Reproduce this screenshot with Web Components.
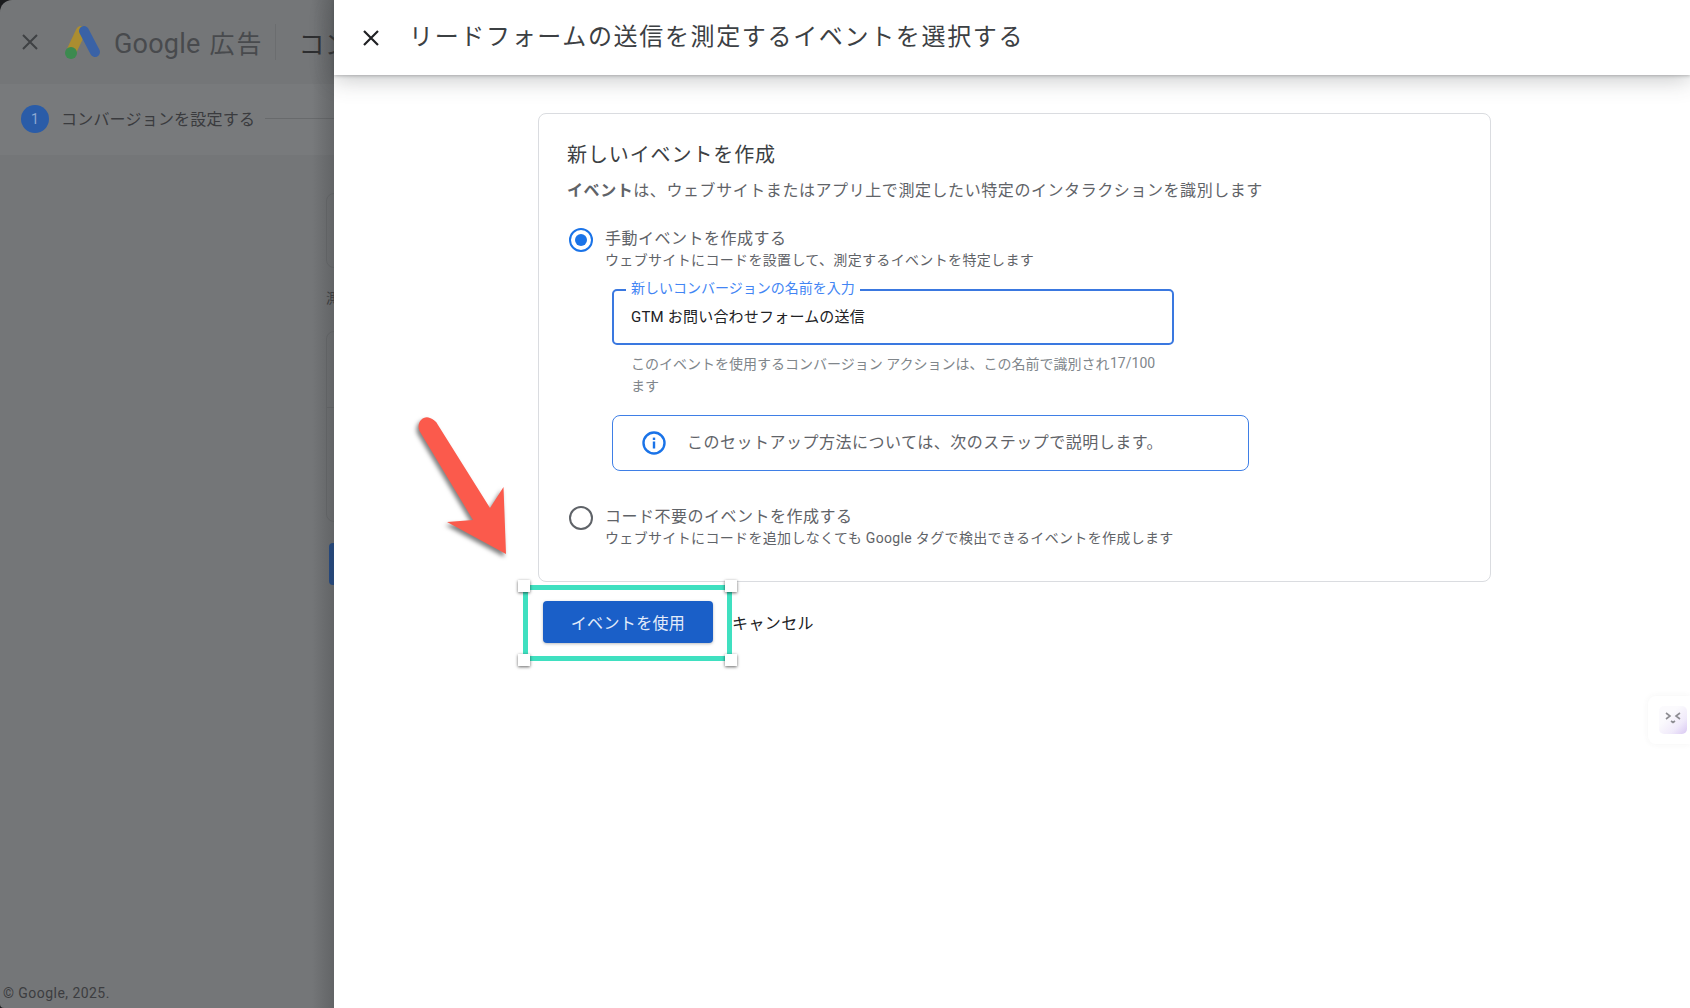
<!DOCTYPE html>
<html lang="ja">
<head>
<meta charset="utf-8">
<title>イベントを選択</title>
<style>
    html, body {
        margin: 0;
        height: 100%;
        overflow: hidden;
        background: #fff;
        font-family: Roboto, "Noto Sans CJK JP", sans-serif;
    }
</style>
</head>
<body>
<app-shell>
    <ads-backdrop slot="backdrop"></ads-backdrop>
    <side-panel slot="panel" heading="リードフォームの送信を測定するイベントを選択する">
        <event-card heading="新しいイベントを作成">
            <span slot="lead"><b>イベント</b>は、ウェブサイトまたはアプリ上で測定したい特定のインタラクションを識別します</span>
            <radio-option checked label="手動イベントを作成する" hint="ウェブサイトにコードを設置して、測定するイベントを特定します">
                <outlined-field label="新しいコンバージョンの名前を入力" value="GTM お問い合わせフォームの送信"
                    help="このイベントを使用するコンバージョン アクションは、この名前で識別されます" count="17/100"></outlined-field>
                <info-note>このセットアップ方法については、次のステップで説明します。</info-note>
            </radio-option>
            <radio-option class="second" label="コード不要のイベントを作成する" hint="ウェブサイトにコードを追加しなくても Google タグで検出できるイベントを作成します"></radio-option>
        </event-card>
        <action-bar primary="イベントを使用" secondary="キャンセル"></action-bar>
    </side-panel>
    <capture-annotation slot="overlay"></capture-annotation>
    <assistant-tab slot="overlay"></assistant-tab>
</app-shell>

<script>
class AppShell extends HTMLElement {
    constructor() {
        super()
        this.attachShadow({ mode: 'open' })
        this.shadowRoot.innerHTML = `
            <style>
                :host {
                    display: flex;
                    position: relative;
                    width: 100%;
                    height: 100vh;
                    overflow: hidden;
                }
                ::slotted([slot="backdrop"]) { flex: 0 0 334px; }
                ::slotted([slot="panel"]) { flex: 1 1 auto; }
            </style>
            <slot name="backdrop"></slot>
            <slot name="panel"></slot>
            <slot name="overlay"></slot>
        `
    }
}

class AdsBackdrop extends HTMLElement {
    constructor() {
        super()
        this.attachShadow({ mode: 'open' })
        this.shadowRoot.innerHTML = `
            <style>
                :host {
                    display: block;
                    background: #1b1c1e;
                    overflow: hidden;
                    min-width: 0;
                }
                .page {
                    position: relative;
                    height: 100%;
                    box-sizing: border-box;
                    display: flex;
                    flex-direction: column;
                    background: #747678;
                    border-radius: 12px 0 0 4px;
                    color: #303134;
                }
                .page::after {
                    content: '';
                    position: absolute;
                    top: 0;
                    bottom: 0;
                    right: 0;
                    width: 22px;
                    background: linear-gradient(90deg, rgba(60, 62, 64, 0), rgba(60, 62, 64, .32));
                }
                .top {
                    flex: none;
                    height: 84px;
                    display: flex;
                    align-items: center;
                    white-space: nowrap;
                }
                .close { flex: none; margin-left: 18px; width: 24px; height: 24px; }
                .logo { flex: none; margin-left: 22px; width: 38px; height: 38px; }
                .brand {
                    flex: none;
                    margin-left: 12px;
                    font-size: 27px;
                    letter-spacing: .2px;
                    color: #484a4d;
                }
                .brand span { margin-left: 9px; font-size: 25px; letter-spacing: 2px; }
                .rule { flex: none; width: 1px; height: 36px; margin-left: 12px; background: #6b6d6f; }
                .crumb { flex: none; margin-left: 22px; font-size: 26px; color: #2d2e30; }
                .steps {
                    flex: none;
                    height: 71px;
                    padding-bottom: 2px;
                    box-sizing: border-box;
                    display: flex;
                    align-items: center;
                    background: #787a7c;
                    white-space: nowrap;
                }
                .num {
                    margin-left: 21px;
                    flex: none;
                    width: 28px;
                    height: 28px;
                    border-radius: 50%;
                    background: #2a5ca8;
                    color: #8ea9d2;
                    font-size: 14px;
                    line-height: 28px;
                    text-align: center;
                }
                .label {
                    flex: none;
                    margin: 0 0 2px 12px;
                    font-size: 16px;
                    letter-spacing: .2px;
                    color: #3a3b3e;
                }
                .line { flex: 1; height: 1px; margin-left: 10px; background: #686a6c; }
                .content {
                    flex: 1;
                    padding: 38px 0 0 326px;
                    display: flex;
                    flex-direction: column;
                }
                .box { flex: none; border: 1px solid #6a6c6e; border-radius: 8px; width: 60px; box-sizing: border-box; }
                .box.a { height: 75px; }
                .measure { flex: none; margin-top: 20px; height: 20px; line-height: 20px; font-size: 14px; color: #3a3b3e; white-space: nowrap; }
                .box.b { margin-top: 23px; height: 191px; }
                .box.b i { display: block; margin-top: 75px; border-top: 1px solid #6a6c6e; }
                .btn { flex: none; margin: 21px 0 0 3px; height: 42px; width: 60px; border-radius: 4px; background: #1d4a8e; }
                .foot {
                    flex: none;
                    padding: 0 0 5px 3px;
                    font-size: 14px;
                    line-height: 20px;
                    letter-spacing: .45px;
                    color: #3c3d40;
                    white-space: nowrap;
                }
            </style>
            <div class="page">
                <div class="top">
                    <svg class="close" viewBox="0 0 24 24"><path d="M5 5 19 19M19 5 5 19" stroke="#3f4144" stroke-width="2" fill="none"/></svg>
                    <svg class="logo" viewBox="0 0 38 38">
                        <path d="M17 8 8 27" stroke="#ab8d30" stroke-width="10" stroke-linecap="round" fill="none"/>
                        <path d="M20 8 31 29" stroke="#3a62a6" stroke-width="10" stroke-linecap="round" fill="none"/>
                        <circle cx="7" cy="30" r="6" fill="#3c8a4f"/>
                    </svg>
                    <div class="brand">Google<span>広告</span></div>
                    <div class="rule"></div>
                    <div class="crumb">コンバ</div>
                </div>
                <div class="steps">
                    <div class="num">1</div>
                    <div class="label">コンバージョンを設定する</div>
                    <div class="line"></div>
                </div>
                <div class="content">
                    <div class="box a"></div>
                    <div class="measure">測</div>
                    <div class="box b"><i></i></div>
                    <div class="btn"></div>
                </div>
                <div class="foot">© Google, 2025.</div>
            </div>
        `
    }
}

class SidePanel extends HTMLElement {
    constructor() {
        super()
        this.attachShadow({ mode: 'open' })
    }

    connectedCallback() {
        this.shadowRoot.innerHTML = `
            <style>
                :host {
                    display: flex;
                    flex-direction: column;
                    min-width: 0;
                    background: #fff;
                    color: #3c4043;
                }
                header {
                    flex: none;
                    position: relative;
                    height: 75px;
                    display: flex;
                    align-items: center;
                    background: #fff;
                    box-shadow: 0 4px 22px rgba(60, 64, 67, .3), 0 1px 3px rgba(60, 64, 67, .3);
                }
                svg { margin-left: 25px; width: 24px; height: 24px; flex: none; }
                h1 {
                    margin: 0 0 2px 26px;
                    font-size: 24px;
                    font-weight: 400;
                    line-height: 36px;
                    letter-spacing: 1.66px;
                    color: #3c4043;
                    white-space: nowrap;
                }
                main {
                    flex: 1;
                    padding: 38px 0 0 204px;
                }
            </style>
            <header>
                <svg viewBox="0 0 24 24"><path d="M5 5 19 19M19 5 5 19" stroke="#202124" stroke-width="2.2" fill="none"/></svg>
                <h1>${this.getAttribute('heading')}</h1>
            </header>
            <main><slot></slot></main>
        `
    }
}

class EventCard extends HTMLElement {
    constructor() {
        super()
        this.attachShadow({ mode: 'open' })
    }

    connectedCallback() {
        this.shadowRoot.innerHTML = `
            <style>
                :host {
                    display: block;
                    width: 953px;
                    box-sizing: border-box;
                    padding: 27px 28px 33px;
                    border: 1px solid #dadce0;
                    border-radius: 8px;
                    background: #fff;
                }
                h2 {
                    margin: 0;
                    font-size: 20px;
                    font-weight: 400;
                    line-height: 28px;
                    letter-spacing: .9px;
                    color: #3c4043;
                }
                .lead {
                    margin: 10px 0 25px;
                    font-size: 16px;
                    line-height: 24px;
                    letter-spacing: .57px;
                    color: #5f6368;
                    white-space: nowrap;
                }
                ::slotted(b) { font-weight: 700; }
            </style>
            <h2>${this.getAttribute('heading')}</h2>
            <div class="lead"><slot name="lead"></slot></div>
            <slot></slot>
        `
    }
}

class RadioOption extends HTMLElement {
    constructor() {
        super()
        this.attachShadow({ mode: 'open' })
    }

    connectedCallback() {
        const checked = this.hasAttribute('checked')
        this.shadowRoot.innerHTML = `
            <style>
                :host {
                    display: block;
                }
                :host(.second) { margin-top: 35px; }
                .row {
                    display: flex;
                    gap: 12px;
                    padding-left: 2px;
                }
                .dot {
                    flex: none;
                    width: 24px;
                    height: 24px;
                    box-sizing: border-box;
                    border: 2.5px solid ${checked ? '#1a73e8' : '#5f6368'};
                    border-radius: 50%;
                    display: flex;
                    align-items: center;
                    justify-content: center;
                }
                .dot i {
                    display: ${checked ? 'block' : 'none'};
                    width: 12px;
                    height: 12px;
                    border-radius: 50%;
                    background: #1a73e8;
                }
                .label {
                    font-size: 16px;
                    line-height: 22px;
                    letter-spacing: .5px;
                    color: #5f6368;
                }
                .hint {
                    font-size: 14px;
                    line-height: 20px;
                    letter-spacing: .34px;
                    color: #5f6368;
                    white-space: nowrap;
                }
                .more { padding: 19px 0 0 45px; }
            </style>
            <div class="row">
                <div class="dot"><i></i></div>
                <div>
                    <div class="label">${this.getAttribute('label')}</div>
                    <div class="hint">${this.getAttribute('hint')}</div>
                </div>
            </div>
            ${this.children.length ? '<div class="more"><slot></slot></div>' : ''}
        `
    }
}

class OutlinedField extends HTMLElement {
    constructor() {
        super()
        this.attachShadow({ mode: 'open' })
    }

    connectedCallback() {
        this.shadowRoot.innerHTML = `
            <style>
                :host {
                    display: block;
                    width: 562px;
                }
                .box {
                    position: relative;
                    height: 56px;
                    box-sizing: border-box;
                    border: 2px solid #3a78e0;
                    border-radius: 5px;
                    padding: 0 0 4px 17px;
                    display: flex;
                    align-items: center;
                    font-size: 15px;
                    letter-spacing: .2px;
                    color: #202124;
                }
                .float {
                    position: absolute;
                    left: 12px;
                    top: -12px;
                    padding: 0 5px;
                    background: #fff;
                    font-size: 14px;
                    line-height: 18px;
                    letter-spacing: 0;
                    color: #4285f4;
                    white-space: nowrap;
                }
                .under {
                    display: flex;
                    margin-top: 8px;
                    padding-left: 19px;
                    color: #80868b;
                    font-size: 14px;
                    line-height: 22px;
                }
                .help { width: 479px; flex: none; }
                .count { margin-top: -1px; }
            </style>
            <div class="box">
                <span class="float">${this.getAttribute('label')}</span>
                <span>${this.getAttribute('value')}</span>
            </div>
            <div class="under">
                <div class="help">${this.getAttribute('help')}</div>
                <div class="count">${this.getAttribute('count')}</div>
            </div>
        `
    }
}

class InfoNote extends HTMLElement {
    constructor() {
        super()
        this.attachShadow({ mode: 'open' })
        this.shadowRoot.innerHTML = `
            <style>
                :host {
                    display: flex;
                    align-items: center;
                    width: 637px;
                    height: 56px;
                    box-sizing: border-box;
                    margin-top: 18px;
                    padding: 0 0 4px 28px;
                    border: 1px solid #3f7fe6;
                    border-radius: 8px;
                    font-size: 16px;
                    letter-spacing: .5px;
                    color: #5f6368;
                    white-space: nowrap;
                }
                svg { flex: none; width: 26px; height: 26px; margin: 4px 20px 0 0; }
            </style>
            <svg viewBox="0 0 26 26">
                <circle cx="13" cy="13" r="10.5" stroke="#1a73e8" stroke-width="2.4" fill="none"/>
                <rect x="11.8" y="11.5" width="2.4" height="7" fill="#1a73e8"/>
                <rect x="11.8" y="7.6" width="2.4" height="2.4" fill="#1a73e8"/>
            </svg>
            <span><slot></slot></span>
        `
    }
}

class ActionBar extends HTMLElement {
    constructor() {
        super()
        this.attachShadow({ mode: 'open' })
    }

    connectedCallback() {
        this.shadowRoot.innerHTML = `
            <style>
                :host {
                    display: flex;
                    align-items: center;
                    gap: 19px;
                    margin: 19px 0 0 5px;
                }
                button {
                    width: 170px;
                    height: 42px;
                    padding: 0;
                    border: 0;
                    border-radius: 4px;
                    font: inherit;
                    font-size: 16px;
                    letter-spacing: .35px;
                    background: #1a5fc8;
                    color: #e3ecfa;
                    box-shadow: 0 1px 3px rgba(60, 64, 67, .35);
                }
                span { font-size: 16px; letter-spacing: .4px; color: #202124; }
            </style>
            <button>${this.getAttribute('primary')}</button>
            <span>${this.getAttribute('secondary')}</span>
        `
    }
}

class CaptureAnnotation extends HTMLElement {
    constructor() {
        super()
        this.attachShadow({ mode: 'open' })
        this.shadowRoot.innerHTML = `
            <style>
                :host {
                    position: absolute;
                    inset: 0;
                    pointer-events: none;
                }
                svg { position: absolute; left: 0; top: 0; }
                .arrow { filter: drop-shadow(-2px 3px 2px rgba(0, 0, 0, .5)); }
                .frame {
                    position: absolute;
                    left: 523px;
                    top: 585px;
                    width: 209px;
                    height: 76px;
                    box-sizing: border-box;
                    border: 5px solid #3fe0c0;
                }
                .frame i {
                    position: absolute;
                    width: 12px;
                    height: 12px;
                    background: #fff;
                    box-shadow: 0 1px 3px rgba(0, 0, 0, .6);
                }
                .nw { left: -10px; top: -10px; }
                .ne { right: -10px; top: -10px; }
                .sw { left: -10px; bottom: -10px; }
                .se { right: -10px; bottom: -10px; }
            </style>
            <svg width="1690" height="1008">
                <path class="arrow" d="M419.5 431 C416 423 423 415 430 418 C433 419 436 421 438 425 L490 508 L503.5 487 L506 554 L447 522 L473 520 Z" fill="#fb5a4c"/>
            </svg>
            <div class="frame"><i class="nw"></i><i class="ne"></i><i class="sw"></i><i class="se"></i></div>
        `
    }
}

class AssistantTab extends HTMLElement {
    constructor() {
        super()
        this.attachShadow({ mode: 'open' })
        this.shadowRoot.innerHTML = `
            <style>
                :host {
                    position: absolute;
                    right: 0;
                    top: 696px;
                    width: 42px;
                    height: 48px;
                    box-sizing: border-box;
                    padding: 10px 0 0 11px;
                    background: #fff;
                    border-radius: 8px 0 0 8px;
                    box-shadow: 0 0 6px rgba(60, 64, 67, .06);
                }
                div {
                    width: 28px;
                    height: 28px;
                    border-radius: 5px;
                    background: linear-gradient(135deg, #fbfafd 35%, #f0eafa 70%, #d9c8f3);
                }
                svg { display: block; }
            </style>
            <div>
                <svg width="28" height="28" viewBox="0 0 28 28">
                    <path d="M7 7 11 10 7 13M21 7 17 10 21 13M12 15 14 16.5 16 15" stroke="#8d8d92" stroke-width="1.6" fill="none"/>
                </svg>
            </div>
        `
    }
}

customElements.define('app-shell', AppShell)
customElements.define('ads-backdrop', AdsBackdrop)
customElements.define('side-panel', SidePanel)
customElements.define('event-card', EventCard)
customElements.define('radio-option', RadioOption)
customElements.define('outlined-field', OutlinedField)
customElements.define('info-note', InfoNote)
customElements.define('action-bar', ActionBar)
customElements.define('capture-annotation', CaptureAnnotation)
customElements.define('assistant-tab', AssistantTab)
</script>
</body>
</html>
